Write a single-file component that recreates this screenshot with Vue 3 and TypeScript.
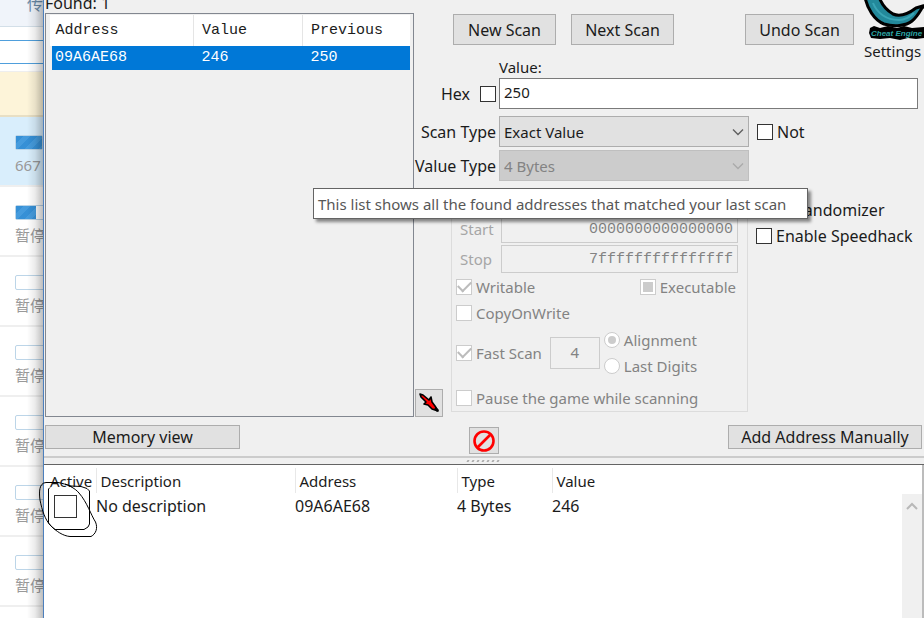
<script setup lang="ts">
import { ref } from 'vue'

interface Task { label: string; progress: number; active?: boolean }
interface Found { address: string; value: string; previous: string }
interface Entry { active: boolean; description: string; address: string; type: string; value: string }

const tasks: Task[] = [
  { label: '667', progress: 100, active: true },
  { label: '暂停', progress: 25 },
  { label: '暂停', progress: 0 },
  { label: '暂停', progress: 0 },
  { label: '暂停', progress: 0 },
  { label: '暂停', progress: 0 },
  { label: '暂停', progress: 0 },
]
const found: Found[] = [{ address: '09A6AE68', value: '246', previous: '250' }]
const entries = ref<Entry[]>([
  { active: false, description: 'No description', address: '09A6AE68', type: '4 Bytes', value: '246' },
])
const value = ref('250')
const hex = ref(false)
const not = ref(false)
const unrandomizer = ref(false)
const speedhack = ref(false)
</script>

<template>
  <div class="desktop">
    <aside class="downloads">
      <div class="tab">传</div>
      <div class="search"></div>
      <div class="notice"></div>
      <div v-for="(task, i) in tasks" :key="i" class="task" :class="{ active: task.active }">
        <div class="bar"><div class="fill" :style="{ width: task.progress + '%' }"></div></div>
        <span>{{ task.label }}</span>
      </div>
    </aside>

    <main class="window">
      <section class="top">
        <div class="results">
          <div class="found">Found: {{ found.length }}</div>
          <div class="list">
            <table>
              <colgroup><col class="c1" /><col class="c2" /><col /></colgroup>
              <thead><tr><th>Address</th><th>Value</th><th>Previous</th></tr></thead>
              <tbody>
                <tr v-for="f in found" :key="f.address">
                  <td>{{ f.address }}</td><td>{{ f.value }}</td><td>{{ f.previous }}</td>
                </tr>
              </tbody>
            </table>
          </div>
        </div>

        <div class="scan">
          <div class="actions">
            <button type="button">New Scan</button>
            <button type="button">Next Scan</button>
            <button type="button" class="undo">Undo Scan</button>
            <a href="#" class="settings">
              <svg viewBox="0 0 60 41" aria-hidden="true">
                <path d="M1-3C3 8 10 20 20 24C30 27 42 26 48 21C53 17 55 13 58 8L62 5L52 8C44 14 36 17 29 14C22 10 18 5 15-3Z" fill="#23899b" stroke="#000" stroke-width="3" stroke-linejoin="round" />
                <path d="M9 3C13 13 22 20 35 20C41 20 46 17 50 13" fill="none" stroke="#3aa5b5" stroke-width="2" />
                <path d="M6 28L10 26L16 28L24 26L33 28L40 26L48 28L60 27V38L52 39L44 38L36 40L26 38L16 39L7 38L5 33Z" fill="#000" />
                <text x="7" y="36">Cheat Engine</text>
              </svg>
              <span>Settings</span>
            </a>
          </div>

          <label class="value-label" for="value">Value:</label>
          <div class="value-row">
            <label class="hex">Hex <input v-model="hex" type="checkbox" /></label>
            <input id="value" v-model="value" type="text" class="value" />
          </div>

          <div class="types">
            <label for="scan-type">Scan Type</label>
            <div class="select">
              <select id="scan-type"><option>Exact Value</option></select>
              <svg viewBox="0 0 12 8" aria-hidden="true"><path d="M1 1.5L6 6.5L11 1.5" /></svg>
            </div>
            <label class="check"><input v-model="not" type="checkbox" />Not</label>
            <label for="value-type">Value Type</label>
            <div class="select off">
              <select id="value-type" disabled><option>4 Bytes</option></select>
              <svg viewBox="0 0 12 8" aria-hidden="true"><path d="M1 1.5L6 6.5L11 1.5" /></svg>
            </div>
          </div>

          <div class="lower">
            <button type="button" class="icon arrow" aria-label="Add selected addresses">
              <svg viewBox="0 0 22 22" aria-hidden="true">
                <path d="M2 2L5 3L11 8L13 5L14 10L17 14L20 19L14 17L10 13L6 12L8 10L3 5Z" fill="#f00" stroke="#000" stroke-width="1.6" stroke-linejoin="round" />
                <path d="M17 16L20 19" stroke="#000" stroke-width="2.6" />
              </svg>
            </button>
            <div class="options" role="group">
              <div class="range"><label for="start">Start</label><input id="start" type="text" value="0000000000000000" disabled /></div>
              <div class="range"><label for="stop">Stop</label><input id="stop" type="text" value="7fffffffffffffff" disabled /></div>
              <div class="line">
                <label class="check"><input type="checkbox" checked disabled />Writable</label>
                <label class="check"><input type="checkbox" class="mixed" disabled />Executable</label>
              </div>
              <div class="line"><label class="check"><input type="checkbox" disabled />CopyOnWrite</label></div>
              <div class="fast">
                <label class="check"><input type="checkbox" checked disabled />Fast Scan</label>
                <input type="text" class="step" value="4" aria-label="Alignment size" disabled />
                <div>
                  <label class="check"><input type="radio" name="mode" checked disabled />Alignment</label>
                  <label class="check"><input type="radio" name="mode" disabled />Last Digits</label>
                </div>
              </div>
              <div class="line"><label class="check"><input type="checkbox" disabled />Pause the game while scanning</label></div>
            </div>
            <div class="extras">
              <label class="check"><input v-model="unrandomizer" type="checkbox" />Unrandomizer</label>
              <label class="check"><input v-model="speedhack" type="checkbox" />Enable Speedhack</label>
            </div>
          </div>
        </div>
      </section>

      <section class="toolbar">
        <button type="button" class="memory">Memory view</button>
        <button type="button" class="icon clear" aria-label="Clear list">
          <svg viewBox="0 0 24 24" aria-hidden="true"><circle cx="12" cy="12" r="9.5" /><path d="M6 18L18 6" /></svg>
        </button>
        <button type="button" class="add">Add Address Manually</button>
      </section>

      <div class="splitter"><i v-for="n in 7" :key="n"></i></div>

      <section class="entries">
        <table>
          <colgroup><col class="e1" /><col class="e2" /><col class="e3" /><col class="e4" /><col /></colgroup>
          <thead><tr><th>Active</th><th>Description</th><th>Address</th><th>Type</th><th>Value</th></tr></thead>
          <tbody>
            <tr v-for="e in entries" :key="e.address">
              <td><input v-model="e.active" type="checkbox" aria-label="Active" /></td>
              <td>{{ e.description }}</td><td>{{ e.address }}</td><td>{{ e.type }}</td><td>{{ e.value }}</td>
            </tr>
          </tbody>
        </table>
        <div class="scrollbar"><svg viewBox="0 0 12 8" aria-hidden="true"><path d="M1 7L6 2L11 7" /></svg></div>
      </section>
    </main>

    <div class="tooltip" role="tooltip">This list shows all the found addresses that matched your last scan</div>
    <svg class="scribble" viewBox="0 0 64 60" aria-hidden="true">
      <path d="M28 4L34 6L44 6.5L50 8.5L52.5 11V44L51 47L47 49.5H18L14 46L11.5 43V9L13 7.500" />
      <path d="M9 2.500H21C30 4 38 8 42 13C50 22 54 35 58.500 42C61 48 59 54 54 56.500H33C26 56 19 51 14 46C8 40 5 30 3 20C2 12 2 3 9 2.500Z" />
    </svg>
  </div>
</template>

<style>
body { overflow: hidden; }
</style>

<style scoped>
* { box-sizing: border-box; }
.desktop { position: relative; display: flex; height: 100vh; overflow: hidden; background: #fff; font: 16px/20px "Noto Sans", "Noto Sans CJK SC", sans-serif; color: #1b1b1b; }
button, input, select { font: inherit; color: inherit; margin: 0; }

.downloads { position: relative; flex: 0 0 43px; overflow: hidden; background: #fff; color: #999; white-space: nowrap; }
.downloads::after { content: ""; position: absolute; top: 0; right: 0; bottom: 0; width: 16px; background: linear-gradient(to right, transparent, rgba(0, 0, 0, 0.08) 50%, rgba(0, 0, 0, 0.26)); }
.tab { display: flex; align-items: flex-end; height: 27px; padding: 0 0 12px 27px; border-bottom: 1px solid #d3dfe8; background: #f0f4fa; color: #6b8ba8; }
.search { height: 24px; margin: 13px 0 7px; border: solid #4f9fdc; border-width: 1px 0; }
.notice { height: 46px; border-top: 1px solid #eee; border-bottom: 2px solid #e8dfc4; background: #fdf4d9; }
.task { height: 70px; padding: 18px 0 0 15px; border-bottom: 2px solid #efefef; }
.task.active { background: #d9eefc; }
.bar { width: 80px; height: 15px; border: 1px solid #bcd5e8; border-radius: 2px; background: #fff; }
.task.active .bar { width: 28px; }
.fill { height: 100%; background: repeating-linear-gradient(135deg, #3690d6 0 5px, #459bdd 5px 10px); }
.task span { display: block; margin-top: 5px; font-size: 15px; }

.window { flex: 1; min-width: 0; display: flex; flex-direction: column; border-left: 1px solid #4c7fbd; background: #f0f0f0; }
.top { display: flex; padding-left: 1px; }
.results { flex: 0 0 370px; display: flex; flex-direction: column; padding-right: 1px; }
.found { display: flex; align-items: flex-end; height: 13px; }
.list { flex: 1; border: 1px solid #828790; background: #f0f0f0; padding: 1px; }
.list table { width: 100%; border-collapse: collapse; table-layout: fixed; font: 15px/20px "Liberation Mono", monospace; }
.c1 { width: 144px; }
.c2 { width: 109px; }
.list th { height: 31px; padding: 0 8px; border-right: 1px solid #e5e5e5; background: #fff; text-align: left; font-weight: 400; }
.list th:first-child { padding-left: 6px; }
.list th:last-child { border-right: 0; }
.list td { height: 24px; padding: 0 8px; background: #0078d7; color: #fff; }
.list td:first-child { padding-left: 3px; border-left: 5px solid #f0f0f0; }

.scan { flex: 1; min-width: 0; display: flex; flex-direction: column; }
button { padding: 0; border: 1px solid #adadad; background: #e1e1e1; }
.actions { display: flex; gap: 15px; height: 63px; padding-left: 38px; }
.actions button { flex: 0 0 103px; height: 31px; margin-top: 14px; }
.actions .undo { flex-basis: 109px; margin-left: auto; margin-right: -5px; }
.settings { flex: 0 0 60px; color: inherit; text-decoration: none; white-space: nowrap; font-size: 15px; }
.settings svg { display: block; width: 60px; height: 41px; }
.settings svg text { fill: #2ca4a4; font: italic 700 8px "Liberation Sans", sans-serif; }
.settings span { display: block; }
.value-label { height: 20px; margin: -6px 0 1px 84px; font-size: 15px; }
.value-row { display: grid; grid-template-columns: 81px 1fr; gap: 3px; padding-right: 6px; }
.hex { display: flex; align-items: center; justify-content: flex-end; gap: 10px; }
.value { width: 100%; height: 31px; padding: 0 4px 3px; border: 1px solid #7a7a7a; background: #fff; font-size: 15px; }
.types { display: grid; grid-template-columns: 81px 250px 1fr; gap: 3px; margin-top: 7px; align-items: center; }
.types > label { text-align: right; white-space: nowrap; }
.types > .check { margin-left: 5px; }
.select { position: relative; font-size: 15px; }
.select select { display: block; width: 100%; height: 31px; padding: 0 4px; border: 1px solid #adadad; border-radius: 0; background: #e1e1e1; appearance: none; }
.select svg { position: absolute; right: 5px; top: 12px; width: 12px; height: 8px; fill: none; stroke: #606060; stroke-width: 1.4; pointer-events: none; }
.select.off select { background: #ccc; border-color: #bfbfbf; color: #838383; opacity: 1; }
.select.off svg { stroke: #aaa; }

.check { display: flex; align-items: center; gap: 4px; height: 26px; white-space: nowrap; }
input[type="checkbox"], input[type="radio"] { appearance: none; flex: none; display: grid; place-items: center; width: 16px; height: 16px; border: 1px solid #333; background: #fff; }
input[type="checkbox"]:disabled, input[type="radio"]:disabled { border-color: #ccc; }
input[type="radio"] { border-radius: 50%; }
input[type="checkbox"]:checked::after { content: ""; width: 11px; height: 6px; margin-bottom: 4px; border: solid #bcbcbc; border-width: 0 0 2px 2px; transform: rotate(-45deg); }
input.mixed::after { content: ""; width: 10px; height: 10px; background: #ccc; }
input[type="radio"]:checked::after { content: ""; width: 8px; height: 8px; border-radius: 50%; background: #ccc; }

.lower { display: flex; flex: 1; margin-top: 8px; }
.icon { display: grid; place-items: center; }
.arrow { align-self: flex-end; width: 28px; height: 28px; margin-right: 8px; }
.arrow svg { width: 22px; height: 22px; }
.options { flex: 0 0 297px; margin: 7px 0 5px; padding: 18px 9px 0 4px; border: 1px solid #dcdcdc; color: #838383; font-size: 15px; }
.range { display: grid; grid-template-columns: 42px 1fr; gap: 3px; align-items: center; margin-bottom: 2px; color: #a6a6a6; }
.range label { padding-left: 4px; }
.range input { width: 100%; height: 28px; padding: 0 4px; border: 1px solid #ccc; background: #f0f0f0; color: #838383; text-align: right; font-family: "Liberation Mono", monospace; }
.line { display: flex; justify-content: space-between; padding-right: 2px; }
.range + .line { margin-top: -1px; }
.fast { display: flex; align-items: center; gap: 4px; margin: 1px 0 6px; }
.step { width: 50px; height: 32px; margin-left: 4px; padding: 0 0 2px; border: 1px solid #ccc; background: #f0f0f0; text-align: center; }
.extras { margin: 8px 0 0 8px; }

.toolbar { display: grid; grid-template-columns: 195px 229px 30px 1fr; align-items: center; height: 39px; padding: 0 2px 0 1px; }
.toolbar .memory, .toolbar .add { height: 24px; line-height: 20px; }
.clear { grid-column: 3; height: 27px; margin-top: 8px; }
.clear svg { width: 24px; height: 24px; fill: none; stroke: #f00; stroke-width: 2.6; }
.add { justify-self: end; width: 194px; white-space: nowrap; }
.splitter { display: flex; justify-content: center; align-items: center; gap: 3px; height: 9px; padding-right: 2px; border-top: 2px solid #ccc; border-bottom: 1px solid #646464; }
.splitter i { width: 2px; height: 2px; background: #aaa; transform: skewX(-30deg); }

.entries { flex: 1; min-height: 0; display: flex; background: #fff; border-right: 2px solid #bcbcbc; }
.entries table { flex: 1; align-self: flex-start; margin-top: 3px; border-collapse: collapse; table-layout: fixed; width: 100%; }
.e1 { width: 52px; }
.e2 { width: 199px; }
.e3 { width: 162px; }
.e4 { width: 95px; }
.entries th { height: 25px; padding: 0 0 0 4px; border-right: 1px solid #e8e8e8; text-align: left; font-weight: 400; font-size: 15px; }
.entries th:first-child { padding-left: 6px; }
.entries th:last-child { border-right: 0; }
.entries td { height: 26px; padding: 0; }
.entries td input { width: 23px; height: 23px; margin-left: 10px; }
.scrollbar { flex: 0 0 20px; margin-top: 29px; background: #f0f0f0; text-align: center; }
.scrollbar svg { width: 12px; height: 8px; fill: none; stroke: #b8b8b8; stroke-width: 2; }

.tooltip { position: absolute; left: 313px; top: 188px; min-width: 495px; padding: 5px 4px 4px; border: 1px solid #646464; background: #fff; color: #575757; white-space: nowrap; font-size: 15px; box-shadow: 3px 3px 3px rgba(0, 0, 0, 0.45); }
.scribble { position: absolute; left: 37px; top: 480px; width: 64px; height: 60px; fill: none; stroke: #000; stroke-width: 1; pointer-events: none; }
</style>
